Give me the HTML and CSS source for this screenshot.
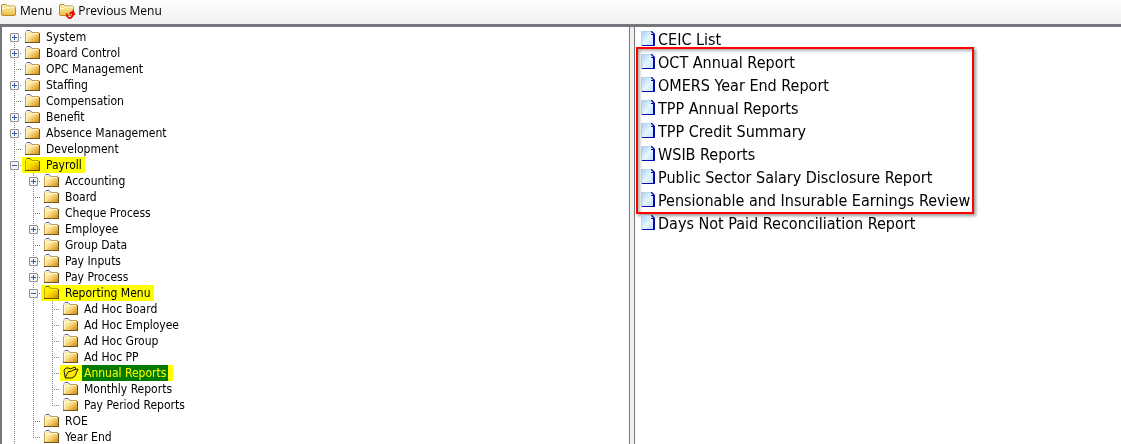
FILE: index.html
```
<!DOCTYPE html>
<html lang="en">
<head>
    <meta charset="UTF-8">
    <meta name="viewport" content="width=device-width, initial-scale=1.0">
    <title>Menu</title>
    <link rel="stylesheet" href="styles.css">
</head>
<body>
    <svg class="defs" aria-hidden="true">
        <defs>
            <linearGradient id="gold" x1="0" y1="0" x2="1" y2="1">
                <stop offset="0" stop-color="#fff6cc"/>
                <stop offset="0.5" stop-color="#fbdc83"/>
                <stop offset="1" stop-color="#d08a0c"/>
            </linearGradient>
            <linearGradient id="soft" x1="0" y1="0" x2="0" y2="1">
                <stop offset="0" stop-color="#fff3b8"/>
                <stop offset="1" stop-color="#e9bd45"/>
            </linearGradient>
            <linearGradient id="paper" x1="0" y1="0" x2="1" y2="1">
                <stop offset="0" stop-color="#a9d4f7"/>
                <stop offset="0.5" stop-color="#e6f6ff"/>
                <stop offset="1" stop-color="#b4dcfa"/>
            </linearGradient>
        </defs>
        <symbol id="folder" viewBox="0 0 16 14">
            <path d="M0.5 12V3L2 1H5L7 3H14V12Z" fill="url(#gold)"/>
            <path d="M0.5 12V2.500M7 2.500H14" fill="none" stroke="#c0a050"/>
            <path d="M1 1.500L2 .5H5L7 2.500" fill="none" stroke="#5a5aa8"/>
            <path d="M2 1H5V2H2Z" fill="#fffbe0"/>
            <path d="M1.500 11V4.500H6L7.500 3.500H13" fill="none" stroke="#fff8d4"/>
            <path d="M0 12.500H15M14.500 3V13" fill="none" stroke="#6b5426"/>
        </symbol>
        <symbol id="folder-open" viewBox="0 0 16 14">
            <path d="M2 11L1 4L3 2H6L7 3L12 1L13 4" fill="#fff04a" stroke="#222200"/>
            <path d="M2 12L5 6L9 5L10 4L15 3L12 10L9 12Z" fill="#ffe81c" stroke="#222200"/>
            <path d="M5 8L10 6" stroke="#ffff9c"/>
        </symbol>
        <symbol id="folder-plain" viewBox="0 0 16 14">
            <path d="M1.500 11V3Q1.500 1.500 3 1.500H6L7.500 3H14Q15.500 3 15.500 4.500V11Q15.500 12.500 14 12.500H3Q1.500 12.500 1.500 11Z" fill="url(#soft)" stroke="#b98c22"/>
            <path d="M2 5.500H6L7.500 4H15" fill="none" stroke="#fff9d8"/>
        </symbol>
        <symbol id="page" viewBox="0 0 15 16">
            <path d="M1 1H11L13 4V15H1Z" fill="url(#paper)"/>
            <path d="M0 .5H10M.5 0V15" fill="none" stroke="#b9d4ee"/>
            <path d="M10 0H11L14 3V15H1V14H12V4H10Z" fill="#0a0aa8"/>
            <path d="M10 1V3H12Z" fill="#f4fbff"/>
        </symbol>
    </svg>

    <nav class="toolbar">
        <a class="tool" href="#">
            <svg class="tool-icon"><use href="#folder-plain"/></svg>
            <span>Menu</span>
        </a>
        <a class="tool" href="#">
            <svg class="tool-icon previous" viewBox="0 0 18 17">
                <use href="#folder-plain" width="16" height="14"/>
                <path d="M9 10.500Q8.500 15 12 15Q15 14.500 15 9.500M11.500 11L15 8.500L16.500 12" fill="none" stroke="#f00000" stroke-width="1.800"/>
            </svg>
            <span>Previous Menu</span>
        </a>
    </nav>

    <main class="panes">
        <section class="tree-pane">
            <ul class="tree" id="tree"></ul>
        </section>
        <div class="splitter"></div>
        <section class="report-pane">
            <ul class="reports">
                <li><a class="report" href="#"><svg class="page"><use href="#page"/></svg>CEIC List</a></li>
            </ul>
            <ul class="reports marked">
                <li><a class="report" href="#"><svg class="page"><use href="#page"/></svg>OCT Annual Report</a></li>
                <li><a class="report" href="#"><svg class="page"><use href="#page"/></svg>OMERS Year End Report</a></li>
                <li><a class="report" href="#"><svg class="page"><use href="#page"/></svg>TPP Annual Reports</a></li>
                <li><a class="report" href="#"><svg class="page"><use href="#page"/></svg>TPP Credit Summary</a></li>
                <li><a class="report" href="#"><svg class="page"><use href="#page"/></svg>WSIB Reports</a></li>
                <li><a class="report" href="#"><svg class="page"><use href="#page"/></svg>Public Sector Salary Disclosure Report</a></li>
                <li><a class="report" href="#"><svg class="page"><use href="#page"/></svg>Pensionable and Insurable Earnings Review</a></li>
            </ul>
            <ul class="reports">
                <li><a class="report" href="#"><svg class="page"><use href="#page"/></svg>Days Not Paid Reconciliation Report</a></li>
            </ul>
        </section>
    </main>

    <script src="tree.js"></script>
</body>
</html>
```
FILE: styles.css
```
* {
    box-sizing: border-box;
}
body {
    display: flex;
    flex-direction: column;
    height: 100vh;
    margin: 0;
    overflow: hidden;
    background: #f0f0f0;
    color: #000;
    font-family: "DejaVu Sans Condensed", "Noto Sans", sans-serif;
    font-size: 12px;
}
a {
    color: inherit;
    text-decoration: none;
}
ul {
    margin: 0;
    padding: 0;
    list-style: none;
}
.defs {
    position: absolute;
    width: 0;
    height: 0;
}

/* toolbar */
.toolbar {
    display: flex;
    flex: none;
    gap: 6px;
    height: 24px;
    background: linear-gradient(#fdfdfd, #f0f0f0);
    font-family: "Open Sans", sans-serif;
    font-size: 12px;
    line-height: 22px;
}
.tool {
    display: flex;
    gap: 4px;
}
.tool-icon {
    width: 16px;
    height: 14px;
    margin-top: 3px;
}
.tool-icon.previous {
    width: 18px;
    height: 17px;
}
.tool-icon.previous + span {
    margin-left: -2px;
}

/* panes */
.panes {
    display: flex;
    flex: 1;
    min-height: 0;
    border-top: 3px solid #75757b;
}
.tree-pane {
    flex: 0 0 56.2%;
    padding: 2px 0 0 3px;
    overflow: hidden;
    background: #fff;
    border: solid #75757b;
    border-width: 0 1px 0 2px;
}
.splitter {
    width: 4px;
    background: #f0f0f0;
}
.report-pane {
    flex: 1;
    padding: 2px 0 0 6px;
    background: #fff;
    border-left: 1px solid #75757b;
}

/* tree */
.tree ul {
    padding-left: 19px;
}
.tree li {
    background: repeating-linear-gradient(#808080 0 1px, transparent 1px 2px) 9px 0 / 1px 100% no-repeat;
}
.tree li:last-child {
    background-size: 1px 8px;
}
.tree > li:first-child {
    background-position: 9px 8px;
}
.tree > li:last-child {
    background-size: 1px 100%;
}
.row {
    display: flex;
    height: 16px;
    line-height: 16px;
}
.branch {
    display: flex;
    align-items: center;
    width: 17px;
    padding-left: 5px;
    background: repeating-linear-gradient(90deg, #808080 0 1px, transparent 1px 2px) 9px 8px / 10px 1px no-repeat;
}
.toggle {
    width: 9px;
    height: 9px;
    padding: 0;
    background: linear-gradient(#3b5aa8, #3b5aa8) 1px 3px / 5px 1px no-repeat, #f4f4f4;
    border: 1px solid #919191;
    border-radius: 1px;
}
.toggle.plus {
    background: linear-gradient(#3b5aa8, #3b5aa8) 1px 3px / 5px 1px no-repeat, linear-gradient(#3b5aa8, #3b5aa8) 3px 1px / 1px 5px no-repeat, #f4f4f4;
}
.node {
    display: flex;
    gap: 3px;
    padding: 0 1px 0 3px;
}
.node svg {
    width: 16px;
    height: 14px;
    margin-top: 1px;
}
.label {
    padding: 0 2px;
}
.node.marked {
    background: #ff0;
}
.marked svg {
    mix-blend-mode: multiply;
}
.node.selected {
    padding-right: 5px;
}
.selected .label {
    background: #007a00;
    color: #ff0;
}

/* report list */
.reports {
    position: relative;
    width: fit-content;
    font-size: 16px;
}
.report {
    display: flex;
    gap: 2px;
    height: 23px;
    line-height: 22px;
    white-space: nowrap;
}
.page {
    width: 15px;
    height: 16px;
    margin-top: 2px;
}
.reports.marked::after {
    content: "";
    position: absolute;
    inset: -5px -4px -1px -5px;
    border: 2px solid #f00;
    box-shadow: 2px 2px 3px rgba(0, 0, 0, 0.4), inset 2px 2px 3px rgba(0, 0, 0, 0.3);
    pointer-events: none;
}
```
FILE: tree.js
```
const items = [
    { name: "System", toggle: "plus" },
    { name: "Board Control", toggle: "plus" },
    { name: "OPC Management" },
    { name: "Staffing", toggle: "plus" },
    { name: "Compensation" },
    { name: "Benefit", toggle: "plus" },
    { name: "Absence Management", toggle: "plus" },
    { name: "Development" },
    { name: "Payroll", toggle: "minus", marked: true, children: [
        { name: "Accounting", toggle: "plus" },
        { name: "Board" },
        { name: "Cheque Process" },
        { name: "Employee", toggle: "plus" },
        { name: "Group Data" },
        { name: "Pay Inputs", toggle: "plus" },
        { name: "Pay Process", toggle: "plus" },
        { name: "Reporting Menu", toggle: "minus", marked: true, children: [
            { name: "Ad Hoc Board" },
            { name: "Ad Hoc Employee" },
            { name: "Ad Hoc Group" },
            { name: "Ad Hoc PP" },
            { name: "Annual Reports", marked: true, selected: true },
            { name: "Monthly Reports" },
            { name: "Pay Period Reports" }
        ] },
        { name: "ROE" },
        { name: "Year End" }
    ] }
];

function renderItem(item) {
    const toggle = item.toggle
        ? `<button class="toggle ${item.toggle}" aria-label="${item.name}"></button>`
        : "";
    const classes = "node" + (item.marked ? " marked" : "") + (item.selected ? " selected" : "");
    const icon = item.selected ? "folder-open" : "folder";
    const children = item.children ? `<ul>${item.children.map(renderItem).join("")}</ul>` : "";
    return `
        <li>
            <div class="row">
                <span class="branch">${toggle}</span>
                <a class="${classes}" href="#"><svg><use href="#${icon}"/></svg><span class="label">${item.name}</span></a>
            </div>
            ${children}
        </li>`;
}

document.getElementById("tree").innerHTML = items.map(renderItem).join("");
```
